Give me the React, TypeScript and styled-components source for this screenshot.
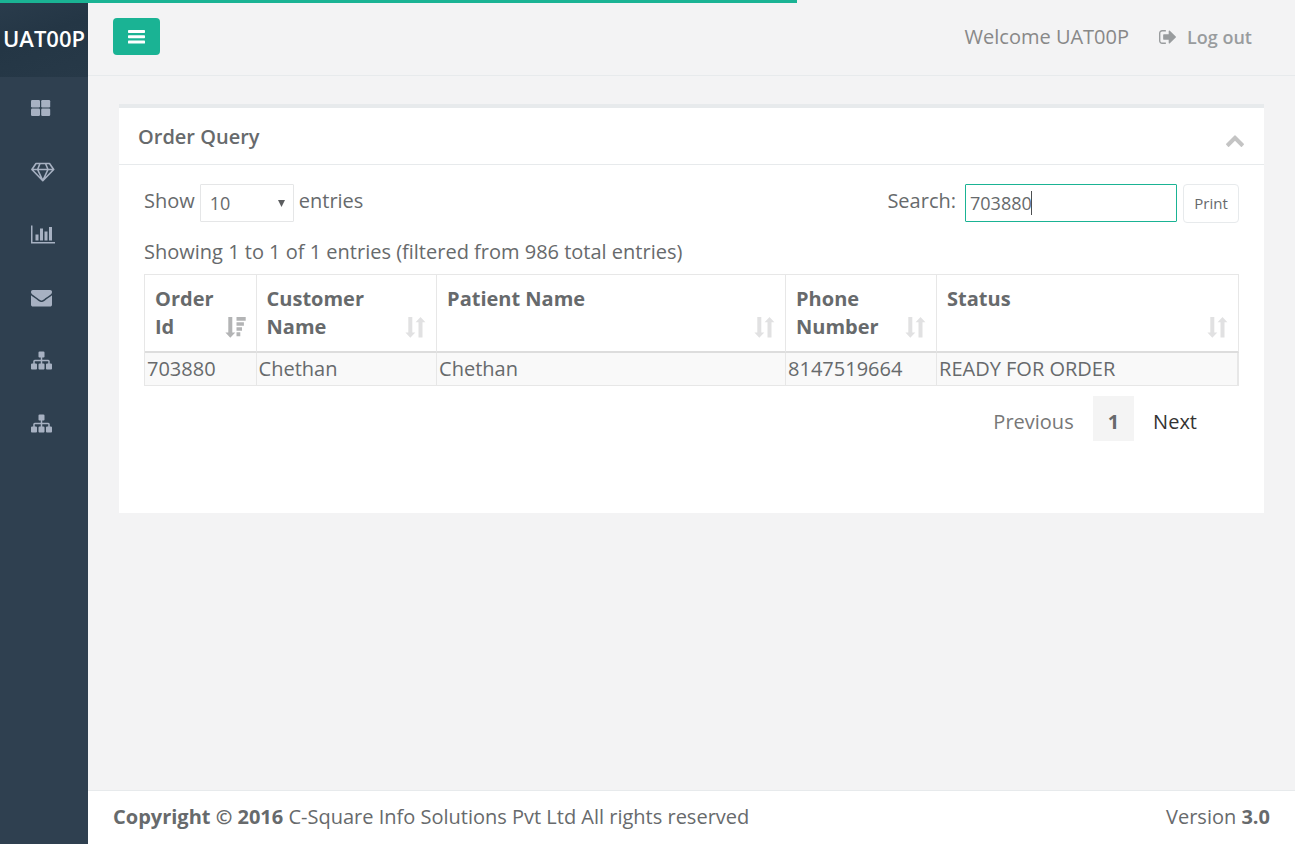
import React, { useState } from "react";
import styled, { createGlobalStyle } from "styled-components";

const GlobalStyle = createGlobalStyle`
  *, *::before, *::after { box-sizing: border-box; }
  body {
    margin: 0;
    background: #f3f3f4;
    color: #676a6c;
    font-family: "Open Sans", "Liberation Sans", sans-serif;
    font-size: 20px;
    line-height: 28px;
  }
  button, input, select { font-family: inherit; color: inherit; }
`;

const Page = styled.div`
  display: flex;
  min-height: 100vh;
`;

const Progress = styled.div`
  position: fixed;
  top: 0;
  left: 0;
  width: 61.55%;
  height: 3px;
  background: #1ab394;
  z-index: 10;
`;

const Sidebar = styled.nav`
  flex: 0 0 88px;
  background: #2f4050;
`;

const Brand = styled.div`
  height: 77px;
  padding-top: 24px;
  background: linear-gradient(160deg, #2a3c4c 0%, #243645 45%, #273948 100%);
  color: #ffffff;
  font-size: 22px;
  font-weight: 600;
  text-align: center;
  white-space: nowrap;
`;

const Menu = styled.ul`
  list-style: none;
  margin: 0;
  padding: 0;
`;

const MenuLink = styled.a`
  display: flex;
  align-items: center;
  height: 63px;
  padding-left: 31px;
  color: #a7b1c2;
`;

const Main = styled.div`
  flex: 1;
  min-width: 0;
  display: flex;
  flex-direction: column;
`;

const TopBar = styled.header`
  display: flex;
  align-items: flex-start;
  justify-content: space-between;
  height: 76px;
  padding: 18px 43px 0 25px;
  border-bottom: 1px solid #e7eaec;
`;

const MenuToggle = styled.button`
  display: flex;
  align-items: center;
  justify-content: center;
  width: 47px;
  height: 37px;
  padding: 0;
  border: 0;
  border-radius: 4px;
  background: #1ab394;
  color: #ffffff;
`;

const UserArea = styled.div`
  display: flex;
  align-items: center;
  gap: 30px;
  padding-top: 5px;
  color: #888888;
`;

const LogoutLink = styled.a`
  display: flex;
  align-items: center;
  gap: 10px;
  color: #999c9e;
  font-size: 18px;
  font-weight: 600;
  text-decoration: none;
`;

const Content = styled.main`
  flex: 1;
  padding: 28px 31px;
`;

const Panel = styled.section`
  min-height: 409px;
  border-top: 4px solid #e7eaec;
  background: #ffffff;
`;

const PanelHeader = styled.div`
  display: flex;
  justify-content: space-between;
  height: 57px;
  padding: 15px 19px 0;
  border-bottom: 1px solid #e7eaec;
`;

const PanelTitle = styled.h1`
  margin: 0;
  font-size: 20px;
  font-weight: 600;
`;

const CollapseButton = styled.button`
  display: flex;
  align-items: center;
  height: 34px;
  padding: 0;
  border: 0;
  background: none;
  color: #c4c4c4;
`;

const PanelBody = styled.div`
  padding: 19px 25px 0;
`;

const Controls = styled.div`
  display: flex;
  justify-content: space-between;
  height: 39px;
`;

const ControlGroup = styled.div<{ $gap: number }>`
  display: flex;
  align-items: flex-start;
  gap: ${(p) => p.$gap}px;
`;

const ControlLabel = styled.label`
  padding-top: 3px;
`;

const SelectWrap = styled.div`
  position: relative;
  width: 94px;
`;

const PageSize = styled.select`
  appearance: none;
  display: block;
  width: 100%;
  height: 38px;
  padding: 0 9px;
  border: 1px solid #e5e6e7;
  border-radius: 1px;
  background: #ffffff;
  font-size: 18px;
`;

const SelectArrow = styled.svg`
  position: absolute;
  top: 16px;
  right: 9px;
  pointer-events: none;
`;

const SearchWrap = styled.div`
  position: relative;
  width: 212px;
  margin-left: 3px;
`;

const SearchInput = styled.input`
  display: block;
  width: 100%;
  height: 38px;
  padding: 0 4px;
  border: 1px solid #1ab394;
  border-radius: 1px;
  background: #ffffff;
  font-size: 18px;
  caret-color: transparent;
  outline: none;
`;

const Caret = styled.span`
  position: absolute;
  top: 7px;
  left: 4px;
  height: 24px;
  border-right: 1px solid #4d4f51;
  font-size: 18px;
  line-height: 24px;
  color: transparent;
  pointer-events: none;

  &::before { content: attr(data-text); }
`;

const PrintButton = styled.button`
  width: 56px;
  height: 39px;
  padding: 0 0 2px;
  border: 1px solid #e7eaec;
  border-radius: 4px;
  background: #ffffff;
  font-size: 15px;
`;

const Info = styled.div`
  padding: 15px 0 8px;
`;

const Table = styled.table`
  width: 100%;
  table-layout: fixed;
  border-spacing: 0;
  border: 1px solid #e7e7e7;
  border-bottom: 0;
  border-right: 0;
`;

const HeadCell = styled.th<{ $width: string }>`
  width: ${(p) => p.$width};
  padding: 10px;
  border-right: 1px solid #e7e7e7;
  border-bottom: 2px solid #dddddd;
  text-align: left;
  vertical-align: top;
`;

const HeadContent = styled.div`
  display: flex;
  align-items: flex-end;
  justify-content: space-between;
  min-height: 56px;
`;

const HeadText = styled.span`
  align-self: flex-start;
`;

const Cell = styled.td`
  padding: 2px;
  border-right: 1px solid #e7e7e7;
  border-bottom: 1px solid #e7e7e7;
  background: #f9f9f9;

  &:last-child { border-right-width: 2px; }
`;

const Pagination = styled.nav`
  display: flex;
  justify-content: flex-end;
  padding: 10px 23px 0 0;
`;

const PageButton = styled.button<{ $kind?: "current" | "disabled" }>`
  height: 45px;
  padding: 6px ${(p) => (p.$kind === "current" ? 15 : 19)}px 0;
  border: 0;
  background: ${(p) => (p.$kind === "current" ? "#f4f4f4" : "none")};
  color: ${(p) => (p.$kind === "current" ? "#676a6c" : p.$kind === "disabled" ? "#777777" : "#333333")};
  font-size: 20px;
  font-weight: ${(p) => (p.$kind === "current" ? 700 : 400)};
  line-height: 28px;
`;

const Footer = styled.footer`
  display: flex;
  justify-content: space-between;
  height: 54px;
  padding: 12px 25px;
  border-top: 1px solid #e7eaec;
  background: #ffffff;
`;

const SitemapIcon = () => (
  <svg width="21" height="21" viewBox="0 0 1792 1792" fill="currentColor" aria-hidden="true">
    <path d="M1792 1248v320q0 40-28 68t-68 28h-320q-40 0-68-28t-28-68v-320q0-40 28-68t68-28h96v-192h-512v192h96q40 0 68 28t28 68v320q0 40-28 68t-68 28h-320q-40 0-68-28t-28-68v-320q0-40 28-68t68-28h96v-192h-512v192h96q40 0 68 28t28 68v320q0 40-28 68t-68 28h-320q-40 0-68-28t-28-68v-320q0-40 28-68t68-28h96v-192q0-52 38-90t90-38h512v-192h-96q-40 0-68-28t-28-68v-320q0-40 28-68t68-28h320q40 0 68 28t28 68v320q0 40-28 68t-68 28h-96v192h512q52 0 90 38t38 90v192h96q40 0 68 28t28 68z" />
  </svg>
);

const GridIcon = () => (
  <svg width="20" height="18" viewBox="0 0 20 18" fill="currentColor" aria-hidden="true">
    <rect width="9" height="7.5" rx="1.2" />
    <rect x="10.2" width="9" height="7.5" rx="1.2" />
    <rect y="8.6" width="9" height="7.4" rx="1.2" />
    <rect x="10.2" y="8.6" width="9" height="7.4" rx="1.2" />
  </svg>
);

const DiamondIcon = () => (
  <svg width="24" height="20" viewBox="0 0 24 20" fill="none" stroke="currentColor" strokeWidth="1.6" strokeLinejoin="round" aria-hidden="true">
    <path d="M5 1.5h13.5l4.2 6L11.8 18.7.9 7.5zM.9 7.5h21.8M9 1.5L6.6 7.5l5.2 11.2L17 7.5l-2.5-6" />
  </svg>
);

const ChartIcon = () => (
  <svg width="24" height="21" viewBox="0 0 2048 1792" fill="currentColor" aria-hidden="true">
    <path d="M640 896v512h-256v-512h256zm384-512v1024h-256v-1024h256zm1024 1152v128h-2048v-1536h128v1408h1920zm-640-896v768h-256v-768h256zm384-384v1152h-256v-1152h256z" />
  </svg>
);

const EnvelopeIcon = () => (
  <svg width="21" height="21" viewBox="0 0 1792 1792" fill="currentColor" aria-hidden="true">
    <path d="M1792 710v794q0 66-47 113t-113 47h-1472q-66 0-113-47t-47-113v-794q44 49 101 87 362 246 497 345 57 42 92.5 65.5t94.5 48 110 24.5h2q51 0 110-24.5t94.5-48 92.5-65.5q170-123 498-345 57-39 100-87zm0-294q0 79-49 151t-122 123q-376 261-468 325-10 7-42.5 31t-54 38.5-52 32.5-57.5 27-50 9h-2q-23 0-50-9t-57.5-27-52-32.5-54-38.5-42.5-31q-91-64-262-182.5t-205-142.5q-62-42-117-115.5t-55-136.5q0-78 41.5-130t118.5-52h1472q65 0 112.5 47t47.5 113z" />
  </svg>
);

const BarsIcon = () => (
  <svg width="17" height="14" viewBox="0 0 17 14" fill="currentColor" aria-hidden="true">
    <rect width="17" height="3" rx="0.7" />
    <rect y="5.3" width="17" height="3" rx="0.7" />
    <rect y="10.6" width="17" height="3" rx="0.7" />
  </svg>
);

const SignOutIcon = () => (
  <svg width="18" height="18" viewBox="0 64 1664 1664" fill="currentColor" aria-hidden="true">
    <path d="M640 1440q0 4 1 20t.5 26.5-3 23.5-10 19.5-20.5 6.5h-320q-119 0-203.5-84.5t-84.5-203.5v-704q0-119 84.5-203.5t203.5-84.5h320q13 0 22.5 9.5t9.5 22.5q0 4 1 20t.5 26.5-3 23.5-10 19.5-20.5 6.5h-320q-66 0-113 47t-47 113v704q0 66 47 113t113 47h312l11.5 1 11.5 3 8 5.5 7 9 2 13.5zm928-544q0 26-19 45l-544 544q-19 19-45 19t-45-19-19-45v-288h-448q-26 0-45-19t-19-45v-384q0-26 19-45t45-19h448v-288q0-26 19-45t45-19 45 19l544 544q19 19 19 45z" />
  </svg>
);

const ChevronUpIcon = () => (
  <svg width="20" height="20" viewBox="0 0 1792 1792" fill="currentColor" aria-hidden="true">
    <path d="M1683 1331l-166 165q-19 19-45 19t-45-19l-531-531-531 531q-19 19-45 19t-45-19l-166-165q-19-19-19-45.5t19-45.5l742-741q19-19 45-19t45 19l742 741q19 19 19 45.5t-19 45.5z" />
  </svg>
);

const SortIcon = ({ active }: { active?: boolean }) => (
  <svg width="21" height="28" viewBox="0 0 21 28" fill={active ? "#b3b4b5" : "#e1e1e2"} aria-hidden="true">
    <path d="M3.3 4h4v15.5h3L5.3 24.8.4 19.5h2.9z" />
    {active ? (
      <path d="M11.5 4h9.2v3.8h-9.2zM11.5 9.2h7.4v3.6h-7.4zM11.5 14.2h5.5v3.6h-5.5zM11.5 19.2h3.8v4h-3.8z" />
    ) : (
      <path d="M13.5 24.5h4V9.3h2.9L15.5 4l-4.9 5.3h2.9z" />
    )}
  </svg>
);

const menuItems = [
  { label: "Dashboard", Icon: GridIcon },
  { label: "Layouts", Icon: DiamondIcon },
  { label: "Graphs", Icon: ChartIcon },
  { label: "Mailbox", Icon: EnvelopeIcon },
  { label: "Orders", Icon: SitemapIcon },
  { label: "Masters", Icon: SitemapIcon },
];

const columns = [
  { title: ["Order", "Id"], width: "10.2%" },
  { title: ["Customer", "Name"], width: "16.5%" },
  { title: ["Patient Name"], width: "31.9%" },
  { title: ["Phone", "Number"], width: "13.8%" },
  { title: ["Status"], width: "27.6%" },
];

const rows = [["703880", "Chethan", "Chethan", "8147519664", "READY FOR ORDER"]];

export default function App() {
  const [query, setQuery] = useState("703880");

  return (
    <>
      <GlobalStyle />
      <Progress />
      <Page>
        <Sidebar>
          <Brand>UAT00P</Brand>
          <Menu>
            {menuItems.map(({ label, Icon }) => (
              <li key={label}>
                <MenuLink href="#" aria-label={label}>
                  <Icon />
                </MenuLink>
              </li>
            ))}
          </Menu>
        </Sidebar>
        <Main>
          <TopBar>
            <MenuToggle aria-label="Toggle menu">
              <BarsIcon />
            </MenuToggle>
            <UserArea>
              <span>Welcome UAT00P</span>
              <LogoutLink href="#">
                <SignOutIcon />
                Log out
              </LogoutLink>
            </UserArea>
          </TopBar>
          <Content>
            <Panel>
              <PanelHeader>
                <PanelTitle>Order Query</PanelTitle>
                <CollapseButton aria-label="Collapse">
                  <ChevronUpIcon />
                </CollapseButton>
              </PanelHeader>
              <PanelBody>
                <Controls>
                  <ControlGroup $gap={5}>
                    <ControlLabel htmlFor="page-size">Show</ControlLabel>
                    <SelectWrap>
                      <PageSize id="page-size" defaultValue="10">
                        <option>10</option>
                        <option>25</option>
                        <option>50</option>
                        <option>100</option>
                      </PageSize>
                      <SelectArrow width="7" height="7" viewBox="0 0 7 7" fill="#5b5d5f" aria-hidden="true">
                        <path d="M0 0h7L3.5 7z" />
                      </SelectArrow>
                    </SelectWrap>
                    <ControlLabel htmlFor="page-size">entries</ControlLabel>
                  </ControlGroup>
                  <ControlGroup $gap={6}>
                    <ControlLabel htmlFor="search">Search:</ControlLabel>
                    <SearchWrap>
                      <SearchInput
                        id="search"
                        autoFocus
                        value={query}
                        onChange={(e) => setQuery(e.target.value)}
                      />
                      <Caret data-text={query} aria-hidden="true" />
                    </SearchWrap>
                    <PrintButton>Print</PrintButton>
                  </ControlGroup>
                </Controls>
                <Info>Showing 1 to 1 of 1 entries (filtered from 986 total entries)</Info>
                <Table>
                  <thead>
                    <tr>
                      {columns.map(({ title, width }, i) => (
                        <HeadCell key={title[0]} $width={width} scope="col">
                          <HeadContent>
                            <HeadText>
                              {title.map((line, n) => (
                                <React.Fragment key={line}>
                                  {n > 0 && <br />}
                                  {line}
                                </React.Fragment>
                              ))}
                            </HeadText>
                            <SortIcon active={i === 0} />
                          </HeadContent>
                        </HeadCell>
                      ))}
                    </tr>
                  </thead>
                  <tbody>
                    {rows.map((row) => (
                      <tr key={row[0]}>
                        {row.map((value, i) => (
                          <Cell key={i}>{value}</Cell>
                        ))}
                      </tr>
                    ))}
                  </tbody>
                </Table>
                <Pagination aria-label="Pages">
                  <PageButton $kind="disabled">Previous</PageButton>
                  <PageButton $kind="current">1</PageButton>
                  <PageButton>Next</PageButton>
                </Pagination>
              </PanelBody>
            </Panel>
          </Content>
          <Footer>
            <span>
              <strong>Copyright © 2016</strong> C-Square Info Solutions Pvt Ltd All rights reserved
            </span>
            <span>
              Version <strong>3.0</strong>
            </span>
          </Footer>
        </Main>
      </Page>
    </>
  );
}
